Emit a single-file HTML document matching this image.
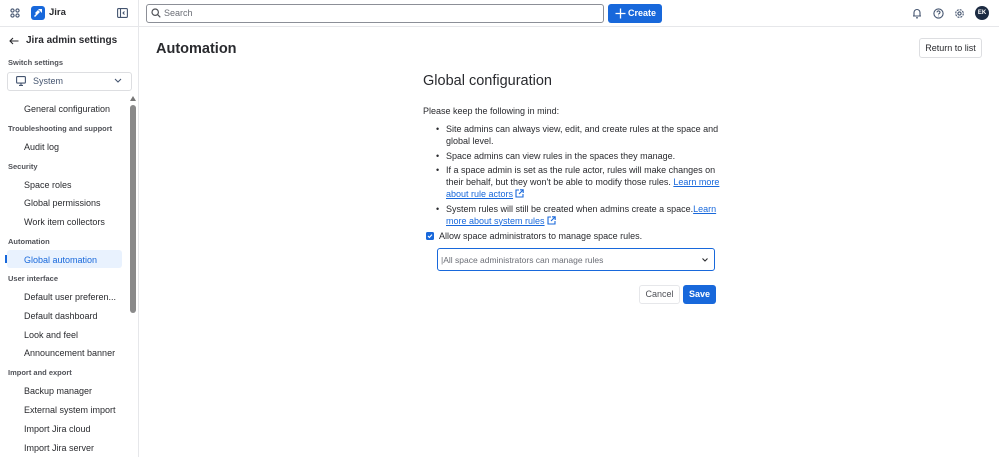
<!DOCTYPE html>
<html><head><meta charset="utf-8"><style>
*{box-sizing:border-box;margin:0;padding:0}
body{width:999px;height:457px;overflow:hidden;background:#fff;font-family:"Liberation Sans",sans-serif;color:#292a2e;position:relative}
.a{position:absolute;white-space:nowrap}
.it{position:absolute;left:24px;font-size:9px;color:#292a2e}
.hd{position:absolute;left:8px;font-size:7.5px;font-weight:bold;color:#505258}
a{color:#1868db;text-decoration:underline}
li{margin-bottom:2.5px}
.ext{display:inline-block;vertical-align:-1px;margin-left:2px}
</style></head><body>
<div class="a" style="left:0;top:26px;width:999px;height:1px;background:#e6e7ea"></div>
<div class="a" style="left:138px;top:0;width:1px;height:457px;background:#e6e7ea"></div>
<svg class="a" style="left:10px;top:8px" width="10" height="10" viewBox="0 0 10 10" fill="none" stroke="#44546f" stroke-width="1.1"><circle cx="2.5" cy="2.5" r="1.6"/><circle cx="7.5" cy="2.5" r="1.6"/><circle cx="2.5" cy="7.5" r="1.6"/><circle cx="7.5" cy="7.5" r="1.6"/></svg>
<div class="a" style="left:31px;top:6px;width:14px;height:14px;background:#1868db;border-radius:3px"></div>
<svg class="a" style="left:33px;top:8px" width="10" height="10" viewBox="0 0 10 10" fill="#fff"><path d="M5 1h4v4z M2 5l3-3 2 2-3 3z M1 8l2-2 1 1-2 2z"/></svg>
<div class="a" style="left:49px;top:7px;font-size:9.5px;font-weight:bold">Jira</div>
<svg class="a" style="left:117px;top:8px" width="11" height="10" viewBox="0 0 11 10" fill="none" stroke="#44546f" stroke-width="1.1"><rect x="0.6" y="0.6" width="9.8" height="8.8" rx="1"/><path d="M3.5 1v8M7.5 3.5l-1.5 1.5 1.5 1.5"/></svg>
<div class="a" style="left:146px;top:4px;width:458px;height:19px;border:1px solid #8c8f97;border-radius:3px"></div>
<svg class="a" style="left:151px;top:8px" width="10" height="10" viewBox="0 0 10 10" fill="none" stroke="#505258" stroke-width="1.2"><circle cx="4.2" cy="4.2" r="3.2"/><path d="M6.6 6.6L9.3 9.3"/></svg>
<div class="a" style="left:164px;top:8px;font-size:9px;color:#6b6e76">Search</div>
<div class="a" style="left:608px;top:4px;width:54px;height:19px;background:#1868db;border-radius:3px;color:#fff;font-size:9px;font-weight:bold;padding:4px 0 0 20px">Create</div>
<svg class="a" style="left:615px;top:8px" width="11" height="11" viewBox="0 0 11 11" stroke="#fff" stroke-width="1.3"><path d="M5.5 0.5v10M0.5 5.5h10"/></svg>
<svg class="a" style="left:912px;top:8px" width="10" height="11" viewBox="0 0 10 11" fill="none" stroke="#44546f" stroke-width="1.1"><path d="M2 8V4.5a3 3 0 016 0V8h1H1zM4 9.8h2"/></svg>
<svg class="a" style="left:933px;top:8px" width="11" height="11" viewBox="0 0 11 11" fill="none" stroke="#44546f" stroke-width="1.1"><circle cx="5.5" cy="5.5" r="4.6"/><path d="M4 4.3a1.5 1.5 0 113 .2c0 1-1.5 1-1.5 2M5.5 7.8v.4"/></svg>
<svg class="a" style="left:954px;top:8px" width="11" height="11" viewBox="0 0 11 11" fill="none" stroke="#44546f" stroke-width="1.1"><circle cx="5.5" cy="5.5" r="1.6"/><circle cx="5.5" cy="5.5" r="3.8" stroke-dasharray="2 1"/></svg>
<div class="a" style="left:975px;top:6px;width:14px;height:14px;border-radius:50%;background:#1c2b42;color:#fff;font-size:6px;font-weight:bold;text-align:center;line-height:14px">EK</div>
<svg class="a" style="left:9px;top:37px" width="10" height="8" viewBox="0 0 10 8" fill="none" stroke="#292a2e" stroke-width="1.1"><path d="M9.5 4H1M4 1L1 4l3 3"/></svg>
<div class="a" style="left:26px;top:35px;font-size:10px;font-weight:bold">Jira admin settings</div>
<div class="hd" style="top:58px">Switch settings</div>
<div class="a" style="left:7px;top:72px;width:125px;height:19px;border:1px solid #dddee1;border-radius:3px"></div>
<svg class="a" style="left:16px;top:76px" width="10" height="10" viewBox="0 0 10 10" fill="none" stroke="#44546f" stroke-width="1.1"><rect x="0.6" y="0.6" width="8.8" height="6.5" rx="1"/><path d="M3 9.4h4M5 7v2"/></svg>
<div class="a" style="left:33px;top:76px;font-size:9px;color:#44546f">System</div>
<svg class="a" style="left:114px;top:78px" width="8" height="5" viewBox="0 0 8 5" fill="none" stroke="#44546f" stroke-width="1.1"><path d="M1 1l3 3 3-3"/></svg>
<div class="a" style="left:130px;top:96px;width:0;height:0;border-left:3px solid transparent;border-right:3px solid transparent;border-bottom:5px solid #777"></div>
<div class="a" style="left:130px;top:105px;width:6px;height:208px;background:#8a8a8a;border-radius:3px"></div>
<div class="it" style="top:104px">General configuration</div>
<div class="hd" style="top:124px">Troubleshooting and support</div>
<div class="it" style="top:142px">Audit log</div>
<div class="hd" style="top:162px">Security</div>
<div class="it" style="top:180px">Space roles</div>
<div class="it" style="top:198px">Global permissions</div>
<div class="it" style="top:217px">Work item collectors</div>
<div class="hd" style="top:237px">Automation</div>
<div class="a" style="left:7px;top:250px;width:115px;height:18px;background:#e9f2fe;border-radius:3px"></div>
<div class="a" style="left:5px;top:255px;width:2px;height:8px;background:#1868db"></div>
<div class="it" style="top:255px;color:#1868db">Global automation</div>
<div class="hd" style="top:274px">User interface</div>
<div class="it" style="top:292px">Default user preferen...</div>
<div class="it" style="top:311px">Default dashboard</div>
<div class="it" style="top:330px">Look and feel</div>
<div class="it" style="top:348px">Announcement banner</div>
<div class="hd" style="top:368px">Import and export</div>
<div class="it" style="top:386px">Backup manager</div>
<div class="it" style="top:405px">External system import</div>
<div class="it" style="top:424px">Import Jira cloud</div>
<div class="it" style="top:443px">Import Jira server</div>
<div class="a" style="left:156px;top:41px;font-size:14.5px;font-weight:bold">Automation</div>
<div class="a" style="left:919px;top:38px;width:63px;height:20px;border:1px solid #dddee1;border-radius:3px;font-size:9px;text-align:center;line-height:18px">Return to list</div>
<div class="a" style="left:423px;top:73px;font-size:14.5px">Global configuration</div>
<div class="a" style="left:423px;top:106px;font-size:9px">Please keep the following in mind:</div>
<ul class="a" style="left:446px;top:123px;width:275px;white-space:normal;font-size:9px;line-height:12px;list-style:none">
<li style="position:relative"><span style="position:absolute;left:-10px">•</span>Site admins can always view, edit, and create rules at the space and global level.</li>
<li style="position:relative"><span style="position:absolute;left:-10px">•</span>Space admins can view rules in the spaces they manage.</li>
<li style="position:relative"><span style="position:absolute;left:-10px">•</span>If a space admin is set as the rule actor, rules will make changes on their behalf, but they won't be able to modify those rules. <a>Learn more about rule actors</a><svg class="ext" width="9" height="9" viewBox="0 0 9 9" fill="none" stroke="#1868db" stroke-width="1.1"><path d="M4 1H1v7h7V5M5 0.8h3.2V4M8 1L4 5"/></svg></li>
<li style="position:relative"><span style="position:absolute;left:-10px">•</span>System rules will still be created when admins create a space.<a>Learn more about system rules</a><svg class="ext" width="9" height="9" viewBox="0 0 9 9" fill="none" stroke="#1868db" stroke-width="1.1"><path d="M4 1H1v7h7V5M5 0.8h3.2V4M8 1L4 5"/></svg></li>
</ul>
<div class="a" style="left:426px;top:232px;width:8px;height:8px;background:#1868db;border-radius:1.5px"></div>
<svg class="a" style="left:427px;top:233px" width="6" height="6" viewBox="0 0 6 6" fill="none" stroke="#fff" stroke-width="1.1"><path d="M1 3l1.4 1.4L5 1.6"/></svg>
<div class="a" style="left:439px;top:231px;font-size:9px">Allow space administrators to manage space rules.</div>
<div class="a" style="left:437px;top:248px;width:278px;height:23px;border:1px solid #1868db;border-radius:3px"></div>
<div class="a" style="left:441px;top:255px;font-size:8.5px;color:#6b6e76">|All space administrators can manage rules</div>
<svg class="a" style="left:702px;top:258px" width="6" height="4" viewBox="0 0 6 4" fill="none" stroke="#292a2e" stroke-width="1.1"><path d="M0.5 0.5l2.5 2.5 2.5-2.5"/></svg>
<div class="a" style="left:639px;top:285px;width:41px;height:19px;border:1px solid #e6e7ea;border-radius:3px;font-size:9px;color:#505258;text-align:center;line-height:17px">Cancel</div>
<div class="a" style="left:683px;top:285px;width:33px;height:19px;background:#1868db;border-radius:3px;font-size:9px;color:#fff;font-weight:bold;text-align:center;line-height:19px">Save</div>
</body></html>
